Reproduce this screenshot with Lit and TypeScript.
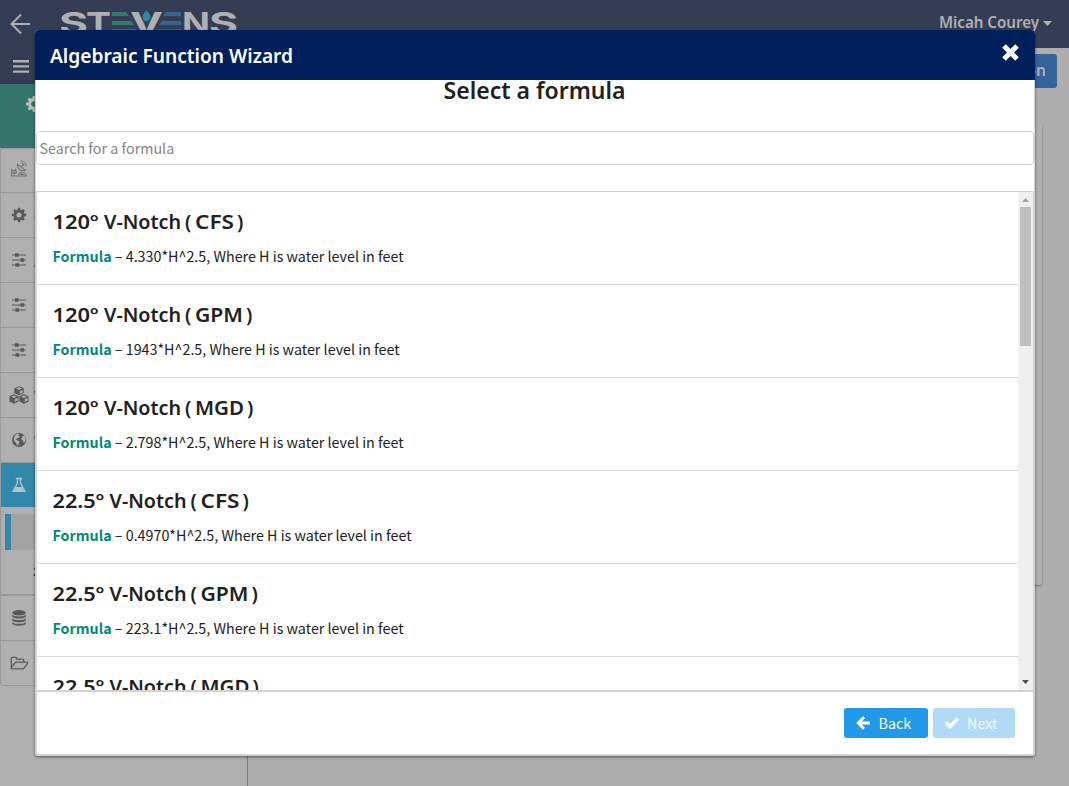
import { LitElement, html, css, svg } from "lit";
import { customElement } from "lit/decorators.js";

const GEAR = svg`<path fill-rule="evenodd" d="M6.8 0h2.4l.4 2.1 1.3.6 1.8-1.3 1.8 1.8-1.2 1.8.5 1.3 2.2.4v2.5l-2.2.4-.5 1.3 1.2 1.8-1.8 1.8-1.8-1.2-1.3.5-.4 2.2H6.8l-.4-2.2-1.3-.5-1.8 1.2-1.8-1.8 1.2-1.8-.5-1.3L0 9.200V6.700l2.200-.4.5-1.300L1.500 3.200l1.800-1.800 1.800 1.300 1.300-.6zM8 5.200a2.800 2.800 0 1 0 0 5.600 2.800 2.800 0 0 0 0-5.600z"/>`;
const SLIDERS = svg`<path d="M1 3h14M1 8h14M1 13h14" stroke="currentColor" stroke-width="1.200" fill="none"/><path d="M4 1.300h3.600v3.400H4zM9.500 6.300h3.600v3.400H9.500zM4.500 11.300h3.600v3.400H4.500z"/>`;
const ICONS: Record<string, unknown> = {
  station: svg`<g fill="none" stroke="currentColor" stroke-width="1.100"><path d="M0 15h16M.5 15V8.500l2 1.500 2-1.500 1 3.500M.5 12.200h5M3 10V15M7 15l1.500-3h5L15 15M10 12V9.500"/><path d="M6.500 3c-.5 4.500 3.500 7.500 8 6.500zM10 6l2.500-2.500M9.500 0c3 0 5.500 2 5.500 5M10.500 2.300c1.500 0 2.500 1 2.500 2.500M9 13.500h4"/></g>`,
  gear: svg`<g transform="translate(.8 .8) scale(.9)">${GEAR}</g>`,
  gearlg: GEAR,
  sliders: SLIDERS,
  cubes: svg`<g transform="translate(-1.200 -.8) scale(1.150)"><g fill="currentColor"><path d="M8 0l4.100 1.800v4.200L8 7.900 3.900 6V1.800z"/><path d="M3.700 7l4 1.800v4.400l-4 2-4-2V8.800zM12.300 7l4 1.800v4.400l-4 2-4-2V8.800z"/></g><path d="M5.500 2.100L8 1l2.500 1.100L8 3.200zM1.200 9.100l2.500-1.100 2.500 1.100-2.500 1.100zM9.800 9.100l2.500-1.100 2.500 1.100-2.500 1.100zM8.600 4.300l2.600-1.100v2.200L8.600 6.600zM4.300 11.300l2.600-1.200v2.300l-2.600 1.300zM12.900 11.300l2.600-1.200v2.300l-2.600 1.300z" fill="#b0b0b0"/></g>`,
  globe: svg`<circle cx="8" cy="8" r="7"/><path fill="#b0b0b0" d="M4 3.200l2.500-1.400 1.600.8-.6 1.200 1.600.4-1.600 1.700-1.700.6-.8 1.400 2 .7 1.700 1.500-1.100 1.900-1.200 1.800-1.200-2.500-1.800-2.200-.7-2.500zM11 4.500l2-1 1 1.500.7 3-1.200 2.600-1.200-.4-.4-1.800-1.600-.8z"/>`,
  flask: svg`<g fill="none" stroke="currentColor" stroke-width="1.300"><path d="M4.800 1.500h6.400M6.500 1.500V6L2 14.300h12L9.500 6V1.500"/></g><path d="M5 10h6l2.300 4.500H2.700z"/>`,
  database: svg`<ellipse cx="8" cy="2.800" rx="6.800" ry="2.700"/><path d="M1.200 4.500c1 2.500 12.600 2.500 13.600 0v2c-1 2.700-12.600 2.700-13.600 0zM1.200 8.200c1 2.500 12.600 2.500 13.600 0v2c-1 2.700-12.600 2.700-13.600 0zM1.200 11.900c1 2.500 12.600 2.500 13.600 0v1.500c-1 3-12.600 3-13.600 0z"/>`,
  folder: svg`<path fill="none" stroke="currentColor" stroke-width="1.300" stroke-linejoin="round" d="M.2 11.800V2.300Q.2 1.300 1.200 1.300h3.300q1 0 1 1v.8h6q1.200 0 1.200 1.200v1.900M.2 11.800Q.4 12.800 1.500 12.800h10.200q.8 0 1.300-.7l3.400-4.400q.7-1.500-.8-1.500H5.500q-.9 0-1.500.7z"/>`,
};

const icon = (name: string, size = 16) =>
  html`<svg class="icon" width=${size} height=${size} viewBox="0 0 16 16" fill="currentColor" overflow="visible">${ICONS[name]}</svg>`;

const MENU = [
  { icon: "station", label: "S" },
  { icon: "gear", label: "C" },
  { icon: "sliders", label: "A" },
  { icon: "sliders", label: "" },
  { icon: "sliders", label: "S" },
  { icon: "cubes", label: "V" },
  { icon: "globe", label: "V" },
];

interface Formula { angle: string; unit: string; unitWidth: number; expression: string; }

const FORMULAS: Formula[] = [
  { angle: "120º", unit: "CFS", unitWidth: 37, expression: "4.330*H^2.5" },
  { angle: "120º", unit: "GPM", unitWidth: 46, expression: "1943*H^2.5" },
  { angle: "120º", unit: "MGD", unitWidth: 47, expression: "2.798*H^2.5" },
  { angle: "22.5º", unit: "CFS", unitWidth: 37, expression: "0.4970*H^2.5" },
  { angle: "22.5º", unit: "GPM", unitWidth: 46, expression: "223.1*H^2.5" },
  { angle: "22.5º", unit: "MGD", unitWidth: 47, expression: "0.3212*H^2.5" },
];

const formulaName = ({ angle, unit, unitWidth }: Formula) => {
  const shift = angle === "120º" ? 51 : 56.5;
  return html`<svg class="name" width="240" height="30">
    <text x="-.5" y="21" textLength=${shift - 5} lengthAdjust="spacingAndGlyphs">${angle}</text>
    <text x=${shift} y="21" textLength="77" lengthAdjust="spacingAndGlyphs">V-Notch</text>
    <text x=${shift + 81} y="21">(</text>
    <text x=${shift + 91} y="21" textLength=${unitWidth + 2} lengthAdjust="spacingAndGlyphs">${unit}</text>
    <text x=${shift + unitWidth + 96} y="21">)</text>
  </svg>`;
};

@customElement("app-root")
export class AppRoot extends LitElement {
  static styles = css`
    :host { display: block; position: relative; width: 1069px; height: 786px; overflow: hidden; background: #b0b0b0;
      font-family: "Noto Sans CJK SC", "Noto Sans", sans-serif; font-size: 14.300px; color: #212121; }
    * { box-sizing: border-box; }
    svg { display: block; flex: none; }
    .top { height: 48px; background: #343d54; display: flex; justify-content: space-between; align-items: flex-start; color: #b0b0b0; }
    .brand { display: flex; gap: 30px; padding: 9px 0 0 9px; }
    .user { display: flex; align-items: center; gap: 4px; margin: 11px 17px 0 0; font: 600 15.500px/24px "Noto Sans", sans-serif; }
    .body { display: flex; height: 738px; }
    .side { width: 248px; border-right: 1px solid #7e7e7e; }
    .burger { height: 36px; background: #343d54; padding: 12px 0 0 13px; color: #b0b0b0; }
    .station { height: 64px; background: #34766c; color: #b5bcba; padding: 12px 0 0 26px; }
    .menu { border: 1px solid #9b9b9b; border-radius: 3px; overflow: hidden; height: 538px; }
    .item { height: 45px; display: flex; align-items: center; gap: 7px; padding-left: 10px; border-bottom: 1px solid #989898; color: #5a5a5a; }
    .item.first { height: 44px; color: #777; padding-bottom: 3px; }
    .item.on { background: #3288aa; color: #b9c4c8; border-color: #3288aa; height: 44px; }
    .item.last { border-bottom: 0; }
    .label { color: #444; width: 10px; }
    .sub { height: 89px; padding: 7px 4px 8px; border-bottom: 2px solid #989898; }
    .subon { height: 36px; background: #a4a4a4; border-left: 6px solid #3288aa; }
    .subrow { height: 40px; line-height: 40px; padding-left: 28px; font-weight: 700; color: #333; }
    .main { flex: 1; background: #aeaeae; display: flex; flex-direction: column; align-items: flex-end; padding: 6px 12px 0 0; }
    .action { width: 160px; height: 34px; border-radius: 3px; background: #33659b; color: #b0b0b0; text-align: right; padding-right: 11px; font: 600 15.500px/33px "Noto Sans", sans-serif; }
    .panel { width: 760px; height: 461px; margin: 36px 15px 0 0; border-radius: 2px; background: #b0b0b0; box-shadow: 0 1px 2px #707070; }
    .modal { position: absolute; left: 35px; top: 30px; width: 1000px; height: 726px; border-radius: 4px; overflow: hidden;
      display: flex; flex-direction: column; background: #fff; }
    .shade { position: absolute; left: 35px; top: 30px; width: 1000px; height: 726px; border-radius: 4px; box-shadow: 0 1px 3px rgba(0,0,0,.55); }
    .head { height: 50px; background: #001f5b; color: #fff; display: flex; justify-content: space-between; padding: 14px 16px 0 15px; }
    .title { font: 600 19.500px/24px "Noto Sans", sans-serif; white-space: nowrap; }
    .content { flex: 1; min-height: 0; display: flex; flex-direction: column; border: 1px solid #d3d3d3; border-top: 0; }
    h1 { margin: 0; height: 51px; text-align: center; font: 600 23px/21px "Noto Sans", sans-serif; color: #212121; padding-right: 1px; }
    .search { height: 34px; border: 1px solid #d4d4d5; border-radius: 4px; color: #858585; line-height: 31px; padding-left: 2.500px; margin: 0 0 26px; }
    .list { height: 500px; border: 1px solid #d3d3d3; display: flex; overflow: hidden; }
    .rows { flex: 1; }
    .row { height: 93px; border-bottom: 1px solid #dbdbdb; padding: 16px 16px 0 15.500px; white-space: nowrap; }
    .name { height: 30px; overflow: visible; }
    .name text { font: 600 19.500px "Noto Sans", sans-serif; fill: #212121; }
    .desc { line-height: 22px; margin-top: 7px; }
    .desc b { color: #00897b; }
    .bar { width: 15px; background: #f0f0f0; display: flex; flex-direction: column; align-items: center; justify-content: space-between; padding-bottom: 6px; }
    .barup { display: flex; flex-direction: column; align-items: center; gap: 5px; padding-top: 6px; }
    .thumb { width: 11px; height: 139px; background: #c0c0c0; }
    .foot { flex: 1; border: 1px solid #d3d3d3; display: flex; justify-content: flex-end; gap: 5px; padding: 16px 18px 0 0; }
    .btn { height: 30px; border-radius: 3px; background: #2199e8; color: #fff; display: flex; align-items: center; gap: 7.500px; padding-left: 12px; width: 84px; font-size: 14.300px; line-height: 30px; }
    .btn.next { width: 82px; background: #b0daf6; color: #f2faff; padding-left: 11px; gap: 7px; }
  `;

  render() {
    return html`
      <div class="top">
        <div class="brand">
          <svg width="22" height="28" viewBox="0 0 22 28" fill="none" stroke="#b0b0b0" stroke-width="2"><path d="M21 15H2M12 5.500L2.500 15l9.500 9.500"/></svg>
          <svg width="178" height="39" viewBox="0 0 178 39" fill="#b0b0b0" font-family="Inter, sans-serif" font-weight="700" font-size="30">
            <text x="-2" y="25" textLength="29" lengthAdjust="spacingAndGlyphs">S</text>
            <text x="25" y="25" textLength="25" lengthAdjust="spacingAndGlyphs">T</text>
            <g fill="#347a70"><path d="M51 3h14l3 4H51zM51 12h19l3 4H51zM51 20h24v4H51z"/></g>
            <text x="69" y="25" textLength="33" lengthAdjust="spacingAndGlyphs">V</text>
            <path fill="#3288ab" stroke="#343d54" stroke-width="1" d="M85.500 0c1.500 3.500 4.500 5 4.500 8a4.500 4.500 0 0 1-9 0C81 5 84 3.500 85.500 0z"/>
            <g fill="#336792"><path d="M105 3h15v4h-18zM101 12h19v4H98zM97 20h23v4H95z"/></g>
            <text x="121" y="25" textLength="28" lengthAdjust="spacingAndGlyphs">N</text>
            <text x="148" y="25" textLength="29" lengthAdjust="spacingAndGlyphs">S</text>
          </svg>
        </div>
        <div class="user"><svg width="100" height="24"><text x="0" y="17" fill="#b0b0b0" textLength="100" lengthAdjust="spacingAndGlyphs">Micah Courey</text></svg>
          <svg width="9" height="5" fill="#b0b0b0"><path d="M0 0h9L4.500 5z"/></svg></div>
      </div>
      <div class="body">
        <div class="side">
          <div class="burger"><svg width="16" height="14" fill="currentColor"><path d="M0 0h16v2.400H0zM0 5.200h16v2.400H0zM0 10.400h16v2.400H0z"/></svg></div>
          <div class="station">${icon("gearlg", 16)}</div>
          <div class="menu">
            ${MENU.map((m, i) => html`<div class="item ${i === 0 ? "first" : ""}">${icon(m.icon)}<span class="label">${m.label}</span></div>`)}
            <div class="item on">${icon("flask")}</div>
            <div class="sub"><div class="subon"></div><div class="subrow">z</div></div>
            <div class="item">${icon("database")}</div>
            <div class="item last">${icon("folder")}</div>
          </div>
        </div>
        <div class="main"><div class="action">on</div><div class="panel"></div></div>
      </div>
      <div class="shade"></div>
      <div class="modal">
        <div class="head">
          <svg class="title" width="246" height="26" fill="#fff"><text x="0" y="19" textLength="243" lengthAdjust="spacingAndGlyphs">Algebraic Function Wizard</text></svg>
          <svg width="17" height="17" viewBox="0 0 17 17" stroke="#fff" stroke-width="5"><path d="M2 2l13 13M15 2L2 15"/></svg>
        </div>
        <div class="content">
          <h1>Select a formula</h1>
          <div class="search">Search for a formula</div>
          <div class="list">
            <div class="rows">
              ${FORMULAS.map((f) => html`<div class="row">
                ${formulaName(f)}
                <div class="desc"><b>Formula</b> – ${f.expression}, Where H is water level in feet</div>
              </div>`)}
            </div>
            <div class="bar">
              <div class="barup"><svg width="7" height="4" fill="#a3a3a3"><path d="M0 4h7L3.500 0z"/></svg><div class="thumb"></div></div>
              <svg width="7" height="4" fill="#505050"><path d="M0 0h7L3.500 4z"/></svg>
            </div>
          </div>
          <div class="foot">
            <div class="btn"><svg width="15" height="14" viewBox="0 0 15 14" fill="none" stroke="#fff" stroke-width="3"><path d="M14 7H3M8 1.200L2.200 7 8 12.800"/></svg>Back</div>
            <div class="btn next"><svg width="16" height="12" viewBox="0 0 16 12" fill="none" stroke="#fff" stroke-width="3.500"><path d="M2 5.500l4 4L14 1.500"/></svg>Next</div>
          </div>
        </div>
      </div>
    `;
  }
}
